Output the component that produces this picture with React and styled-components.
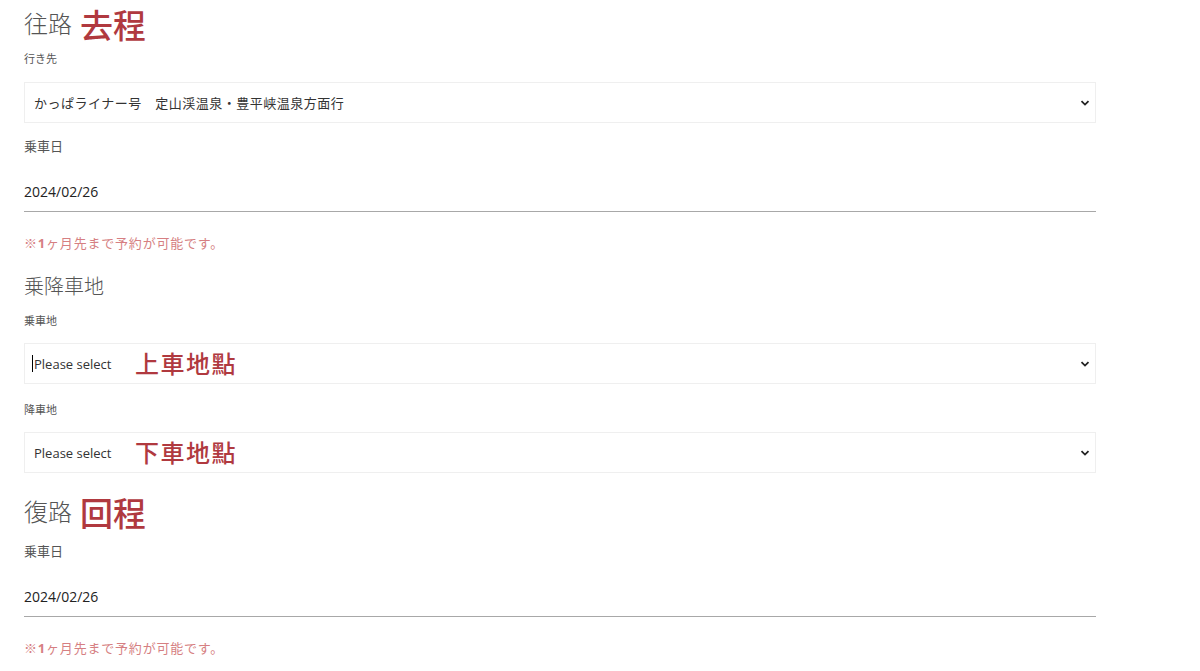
import React from 'react'
import styled, { createGlobalStyle } from 'styled-components'

const GlobalStyle = createGlobalStyle`
    body {
        margin: 0;
        background: #fff;
        font-family: "Open Sans", "Noto Sans CJK JP", sans-serif;
        color: #333;
    }
`

let Page = styled.div`
    width: 1072px;
    padding: 0 24px;
`

let Heading = styled.h2`
    display: flex;
    align-items: center;
    gap: 8px;
    height: 44px;
    margin: ${props => props.top || 0}px 0 0;
    font-family: "Noto Sans CJK JP", sans-serif;
    font-size: 24px;
    font-weight: 300;
    color: #555;
`

let Note = styled.span`
    font-family: "Noto Sans CJK TC", sans-serif;
    font-weight: 500;
    color: #b0393f;
    font-size: ${props => props.size || 24}px;
    letter-spacing: ${props => props.spacing || 0}px;
    padding-top: ${props => props.shift || 0}px;
`

let SubHeading = styled.h3`
    margin: 19px 0 0;
    height: 28px;
    line-height: 28px;
    font-family: "Noto Sans CJK JP", sans-serif;
    font-size: 20px;
    font-weight: 300;
    color: #555;
`

let Label = styled.div`
    margin-top: ${props => props.top}px;
    height: 20px;
    line-height: 20px;
    font-family: "Noto Sans CJK JP", sans-serif;
    font-size: ${props => props.big ? 13 : 11}px;
    color: #555;
`

let SelectBox = styled.div`
    position: relative;
    display: flex;
    align-items: center;
    justify-content: space-between;
    box-sizing: border-box;
    height: 41px;
    margin-top: 13px;
    padding: 0 5px 0 9px;
    border: 1px solid #efefef;
    font-size: 13px;
    letter-spacing: ${props => props.wide ? 0.5 : 0}px;
    color: #333;
`

let Caret = styled.span`
    position: absolute;
    left: 7px;
    top: 11px;
    width: 1px;
    height: 17px;
    background: #000;
`

let Overlay = styled.span`
    position: absolute;
    left: 110px;
    top: 1px;
`

let DateInput = styled.div`
    box-sizing: border-box;
    height: 40px;
    margin-top: ${props => props.top}px;
    padding-top: 10px;
    border-bottom: 1px solid #a8a8a8;
    font-size: 14px;
    color: #222;
`

let Hint = styled.div`
    margin-top: ${props => props.top}px;
    height: 20px;
    line-height: 20px;
    font-family: "Noto Sans CJK JP", sans-serif;
    font-size: 13px;
    letter-spacing: 0.8px;
    color: #d67f82;
    b {
        font-family: "Open Sans", sans-serif;
        font-weight: 700;
    }
`

const Chevron = () => (
    <svg width="10" height="10" viewBox="0 0 10 10">
        <path d="M1.5 3.2 L5 6.6 L8.5 3.2" fill="none" stroke="#222" strokeWidth="1.8" />
    </svg>
)

const Select = ({ children, caret, overlay, top, wide }) => (
    <SelectBox wide={wide} style={top ? { marginTop: top } : null}>
        {caret ? <Caret /> : null}
        <span>{children}</span>
        {overlay ? <Overlay><Note size={24} spacing={1.5}>{overlay}</Note></Overlay> : null}
        <Chevron />
    </SelectBox>
)

const App = () => (
    <Page>
        <GlobalStyle />
        <Heading>往路 <Note size={33} shift={4}>去程</Note></Heading>
        <Label top={4}>行き先</Label>
        <Select wide top={14}>かっぱライナー号　定山渓温泉・豊平峡温泉方面行</Select>
        <Label big top={13}>乗車日</Label>
        <DateInput top={16}>2024/02/26</DateInput>
        <Hint top={21}>※<b>1</b>ヶ月先まで予約が可能です。</Hint>

        <SubHeading>乗降車地</SubHeading>
        <Label top={10}>乗車地</Label>
        <Select caret overlay="上車地點">Please select</Select>
        <Label top={15}>降車地</Label>
        <Select overlay="下車地點">Please select</Select>

        <Heading top={15}>復路 <Note size={33} shift={4}>回程</Note></Heading>
        <Label big top={9}>乗車日</Label>
        <DateInput top={16}>2024/02/26</DateInput>
        <Hint top={21}>※<b>1</b>ヶ月先まで予約が可能です。</Hint>
    </Page>
)

export default App
